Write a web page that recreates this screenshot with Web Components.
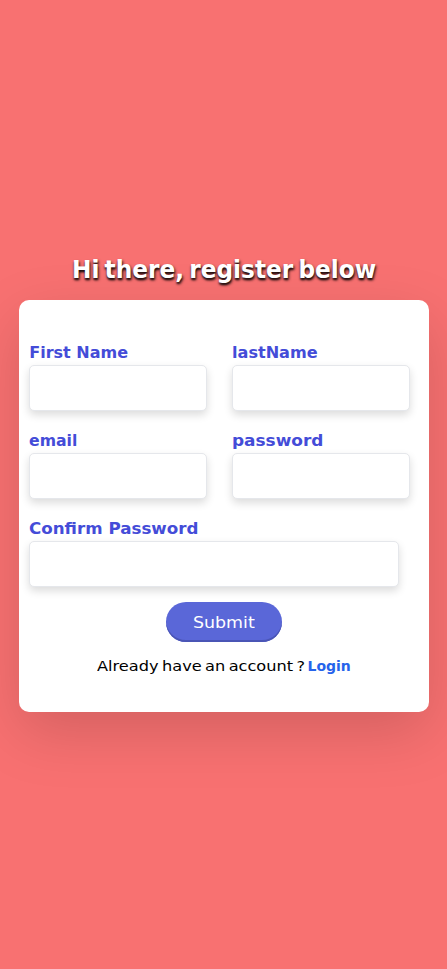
<!DOCTYPE html>
<html lang="en">
<head>
<meta charset="utf-8">
<title>Register</title>
<style>
html,body{margin:0;height:100%}
body{background:#f87171;font-family:"DejaVu Sans",sans-serif;overflow:hidden}
</style>
</head>
<body>
<register-page></register-page>
<script>
// Stretches one line of text to the width given in its "w" attribute.
class FitText extends HTMLElement{
  connectedCallback(){
    if(this.shadowRoot)return;
    const w=+this.getAttribute('w');
    this.attachShadow({mode:'open'}).innerHTML=`<style>
      :host{display:inline-block;width:${w}px;white-space:pre;text-align:left}
      span{display:inline-block;transform-origin:0 50%}
    </style><span><slot></slot></span>`;
    const s=this.shadowRoot.querySelector('span');
    s.style.transform=`scaleX(${w/s.offsetWidth})`;
  }
}
class FormField extends HTMLElement{
  connectedCallback(){
    if(this.shadowRoot)return;
    this.attachShadow({mode:'open'}).innerHTML=`<style>
      :host{display:block;height:88px}
      label{display:block;height:25px;line-height:25px;font-size:16px;font-weight:700;color:#444cd8}
      input{display:block;box-sizing:border-box;width:100%;height:46px;margin:0;padding:8px 12px;border:1px solid #e5e7eb;border-radius:5px;background:#fff;box-shadow:0 4px 8px rgba(0,0,0,.14);outline:0;font:inherit}
    </style><label for="i"><fit-text w="${this.getAttribute('label-width')}">${this.getAttribute('label')}</fit-text></label><input id="i" type="${this.getAttribute('type')||'text'}">`;
  }
}
class PillButton extends HTMLElement{
  connectedCallback(){
    if(this.shadowRoot)return;
    this.attachShadow({mode:'open'}).innerHTML=`<style>
      :host{display:block}
      button{display:block;box-sizing:border-box;width:116px;height:40.5px;padding:1px 0 0;border:0;border-radius:21px;background:#5a67d8;color:#fff;font:400 16px/39px "DejaVu Sans",sans-serif;box-shadow:inset 0 -2px 0 #4a55b5}
    </style><button type="button"><slot></slot></button>`;
  }
}
class FormCard extends HTMLElement{
  connectedCallback(){
    if(this.shadowRoot)return;
    this.attachShadow({mode:'open'}).innerHTML=`<style>
      :host{display:block;box-sizing:border-box;width:410.7px;height:411.7px;padding:40px 9.6px 0 10.6px;border-radius:10px;background:#fff;box-shadow:0 20px 60px rgba(0,0,0,.15)}
    </style><slot></slot>`;
  }
}
class RegisterPage extends HTMLElement{
  connectedCallback(){
    if(this.shadowRoot)return;
    this.attachShadow({mode:'open'}).innerHTML=`<style>
      :host{display:flex;flex-direction:column;align-items:center;box-sizing:border-box;height:969px;padding:252px 0 0 1px}
      h1{margin:0;height:48px;font-size:24px;line-height:36px;font-weight:700;color:#fff;word-spacing:-3px;text-shadow:1px 2px 3px rgba(0,0,0,.8),0 2px 2px rgba(0,0,0,.6)}
      .grid{display:grid;grid-template-columns:178px 178px;column-gap:24.7px}
      .wide{grid-column:1/3;width:370px;height:85.5px}
      .actions{display:flex;flex-direction:column;align-items:center;margin-left:-2px}
      p{display:flex;gap:3px;margin:12px 0 0;font-size:14px;line-height:24px;color:#000;word-spacing:-1.5px}
      a{color:#2563eb;font-weight:700;text-decoration:none}
    </style>
    <h1><fit-text w="304">Hi there, register below</fit-text></h1>
    <form-card>
      <div class="grid">
        <form-field label="First Name" label-width="99"></form-field>
        <form-field label="lastName" label-width="85.5"></form-field>
        <form-field label="email" label-width="48" type="email"></form-field>
        <form-field label="password" label-width="91" type="password"></form-field>
        <form-field class="wide" label="Confirm Password" label-width="169" type="password"></form-field>
      </div>
      <div class="actions">
        <pill-button><fit-text w="62">Submit</fit-text></pill-button>
        <p><fit-text w="208">Already have an account ?</fit-text><a><fit-text w="43">Login</fit-text></a></p>
      </div>
    </form-card>`;
  }
}
customElements.define('fit-text',FitText);
customElements.define('form-field',FormField);
customElements.define('pill-button',PillButton);
customElements.define('form-card',FormCard);
customElements.define('register-page',RegisterPage);
</script>
</body>
</html>
